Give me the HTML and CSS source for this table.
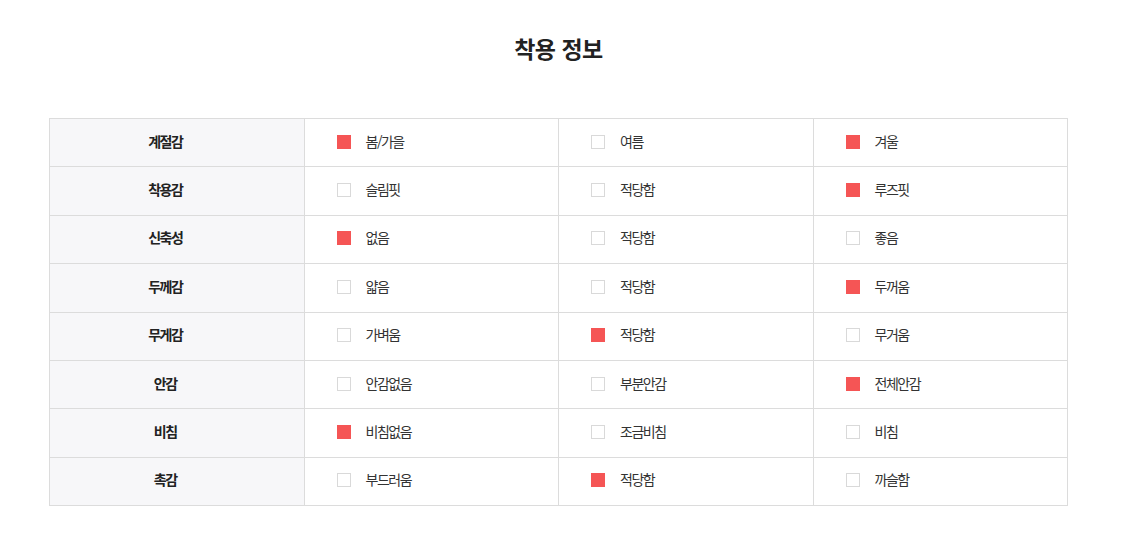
FILE: index.html
```html
<!DOCTYPE html>
<html lang="ko">
<head>
<meta charset="utf-8">
<link rel="stylesheet" href="styles.css">
</head>
<body>
<div class="page">
  <h2 class="title">착용 정보</h2>
  <table class="fit">
    <tbody>
      <tr><th>계절감</th><td><span class="cb on"></span>봄/가을</td><td><span class="cb"></span>여름</td><td><span class="cb on"></span>겨울</td></tr>
      <tr><th>착용감</th><td><span class="cb"></span>슬림핏</td><td><span class="cb"></span>적당함</td><td><span class="cb on"></span>루즈핏</td></tr>
      <tr><th>신축성</th><td><span class="cb on"></span>없음</td><td><span class="cb"></span>적당함</td><td><span class="cb"></span>좋음</td></tr>
      <tr><th>두께감</th><td><span class="cb"></span>얇음</td><td><span class="cb"></span>적당함</td><td><span class="cb on"></span>두꺼움</td></tr>
      <tr><th>무게감</th><td><span class="cb"></span>가벼움</td><td><span class="cb on"></span>적당함</td><td><span class="cb"></span>무거움</td></tr>
      <tr><th>안감</th><td><span class="cb"></span>안감없음</td><td><span class="cb"></span>부분안감</td><td><span class="cb on"></span>전체안감</td></tr>
      <tr><th>비침</th><td><span class="cb on"></span>비침없음</td><td><span class="cb"></span>조금비침</td><td><span class="cb"></span>비침</td></tr>
      <tr><th>촉감</th><td><span class="cb"></span>부드러움</td><td><span class="cb on"></span>적당함</td><td><span class="cb"></span>까슬함</td></tr>
    </tbody>
  </table>
</div>
</body>
</html>
```
FILE: styles.css
```css
html, body {
  margin: 0;
  padding: 0;
  background: #fff;
}
body {
  font-family: "Noto Sans CJK KR", "Noto Sans", sans-serif;
  color: #333;
}
.page {
  padding: 31px 57px 0 49px;
}
.title {
  margin: 0;
  text-align: center;
  font-size: 23px;
  font-weight: 700;
  line-height: 34px;
  color: #222;
  letter-spacing: -0.5px;
}
.fit {
  margin-top: 53px;
  width: 1019px;
  border-collapse: collapse;
  table-layout: fixed;
}
.fit tr {
  height: 48.4px;
}
.fit th, .fit td {
  border: 1px solid #dcdcdc;
  padding: 0 0 4px 0;
  font-size: 14px;
  letter-spacing: -1.5px;
  vertical-align: middle;
}
.fit th {
  background: #f7f7f9;
  font-weight: 700;
  color: #222;
  text-align: center;
  padding-right: 23px;
}
.fit td {
  padding-left: 32px;
  color: #333;
}
.cb {
  display: inline-block;
  width: 14px;
  height: 14px;
  box-sizing: border-box;
  border: 1px solid #d9d9d9;
  background: #fff;
  vertical-align: -2px;
  margin-right: 15px;
}
.cb.on {
  background: #f55555;
  border-color: #f55555;
}
```
